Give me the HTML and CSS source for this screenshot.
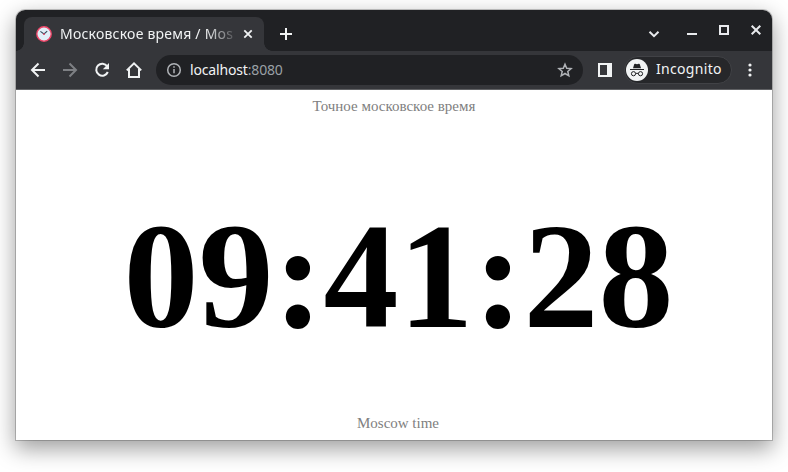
FILE: index.html
```html
<!DOCTYPE html>
<html lang="ru">
<head>
<meta charset="utf-8">
<title>Московское время</title>
<link rel="stylesheet" href="styles.css">
</head>
<body>
<div class="window">
  <header class="tabs">
    <div class="tab">
      <svg class="favicon" width="16" height="16" viewBox="0 0 16 16"><circle cx="8" cy="8" r="7.2" fill="#e1eff8" stroke="#f0476a" stroke-width="1.4"/><path d="M4.4 5.4 8 8l3.2-2.8" fill="none" stroke="#334b5c" stroke-width="1.1"/><circle cx="8" cy="8.2" r=".9" fill="#ef4b6c"/></svg>
      <span class="tab-title">Московское время / Mos</span>
      <svg class="tab-close" width="10" height="10" viewBox="0 0 10 10"><path d="m1.3 1.3 7.4 7.4m0-7.4L1.3 8.7"/></svg>
    </div>
    <svg class="new-tab" width="14" height="14" viewBox="0 0 14 14"><path d="M7 1v12M1 7h12"/></svg>
    <div class="controls">
      <svg width="12" height="12" viewBox="0 0 12 12"><path d="m1.5 3.7 4.5 4.5 4.5-4.5"/></svg>
      <svg width="12" height="12" viewBox="0 0 12 12"><path d="M1 10h10"/></svg>
      <svg width="12" height="12" viewBox="0 0 12 12"><path d="M2 2h8v8H2z"/></svg>
      <svg width="12" height="12" viewBox="0 0 12 12"><path d="m1.7 1.7 8.6 8.6m0-8.6-8.6 8.6"/></svg>
    </div>
  </header>
  <nav class="toolbar">
    <svg class="nav-icon" width="16" height="16" viewBox="0 0 16 16"><path d="M15 8H2m6.5-6.5L2 8l6.5 6.5"/></svg>
    <svg class="nav-icon off" width="16" height="16" viewBox="0 0 16 16"><path d="M1 8h13M7.5 1.5 14 8l-6.5 6.5"/></svg>
    <svg class="nav-icon" width="16" height="16" viewBox="0 0 16 16"><path d="M13.2 4.3A6 6 0 1 0 13.8 10"/><path class="solid" d="M15 1v6.2H8.8z"/></svg>
    <svg class="nav-icon" width="16" height="16" viewBox="0 0 16 16"><path d="M.8 8.4 8 1.4l7.2 7M3 7v8h10V7"/></svg>
    <div class="address">
      <svg width="16" height="16" viewBox="0 0 16 16"><circle cx="8" cy="8" r="6.3"/><path d="M8 7v4.3M8 4.2v1.6"/></svg>
      <span class="url"><b>localhost</b><i>:8080</i></span>
      <svg width="16" height="16" viewBox="0 0 16 16"><path d="m8 2.2 1.7 4 4.4.4-3.3 2.9 1 4.3L8 11.5l-3.8 2.3 1-4.3-3.3-2.9 4.4-.4z"/></svg>
    </div>
    <svg class="panel" width="14" height="14" viewBox="0 0 14 14"><path d="M0 0h14v14H0zM2 2v10h7V2z"/></svg>
    <div class="profile">
      <svg width="22" height="22" viewBox="0 0 22 22"><circle cx="11" cy="11" r="11" fill="#f1f3f4"/><path d="M7 9.2 8.2 5.2q.3-.7 1-.5l1.8.5 1.8-.5q.7-.2 1 .5L15 9.2z" fill="#202124"/><path d="M4 10.5h14M9.7 14.6q1.3-.8 2.6 0" fill="none" stroke="#202124"/><circle cx="7.5" cy="14.7" r="2.1" fill="none" stroke="#202124"/><circle cx="14.5" cy="14.7" r="2.1" fill="none" stroke="#202124"/></svg>
      <span>Incognito</span>
    </div>
    <svg class="more" width="4" height="14" viewBox="0 0 4 14"><circle cx="2" cy="2" r="1.6"/><circle cx="2" cy="7" r="1.6"/><circle cx="2" cy="12" r="1.6"/></svg>
  </nav>
  <main class="page">
    <p>Точное московское время</p>
    <h1>09:41:28</h1>
    <p class="caption">Moscow time</p>
  </main>
</div>
</body>
</html>
```

FILE: styles.css
```css
* { box-sizing: border-box; }
body {
  margin: 0;
  height: 472px;
  padding: 10px 16px 32px;
  overflow: hidden;
  background: #fff;
  font-family: "Noto Sans", sans-serif;
}
svg { display: block; flex: none; }
.window {
  height: 430px;
  display: flex;
  flex-direction: column;
  border-radius: 9px 9px 0 0;
  box-shadow: 0 0 0 1px rgba(0, 0, 0, .2), 0 8px 22px 1px rgba(0, 0, 0, .38);
}
.tabs {
  height: 41px;
  display: flex;
  padding: 7px 10px 0 8px;
  border-radius: 9px 9px 0 0;
  background: #202124;
}
.tab {
  position: relative;
  width: 240px;
  height: 34px;
  display: flex;
  align-items: center;
  padding: 0 11px 0 12px;
  border-radius: 8px 8px 0 0;
  background: #35363a;
}
.tab::before, .tab::after {
  content: "";
  position: absolute;
  bottom: 0;
  width: 8px;
  height: 8px;
}
.tab::before { left: -8px; background: radial-gradient(circle at 0 0, transparent 7.5px, #35363a 8px); }
.tab::after { right: -8px; background: radial-gradient(circle at 100% 0, transparent 7.5px, #35363a 8px); }
.tab-title {
  width: 175px;
  margin: 0 8px;
  white-space: nowrap;
  font-size: 14px;
  letter-spacing: .22px;
  line-height: 20px;
  color: #f1f3f4;
  -webkit-mask-image: linear-gradient(90deg, #000 145px, transparent 180px);
  mask-image: linear-gradient(90deg, #000 145px, transparent 180px);
}
.tab-close, .new-tab, .controls svg { fill: none; stroke: #f1f3f4; stroke-width: 1.8; }
.new-tab { margin: 10px 0 0 15px; stroke-width: 2; }
.controls {
  display: flex;
  margin-left: auto;
  padding-top: 7px;
  gap: 20px;
}
.controls svg { stroke: #e8eaed; stroke-width: 2; }
.controls svg:first-child { margin: 4px 6px 0 0; }
.toolbar {
  height: 38px;
  flex: none;
  display: flex;
  align-items: center;
  padding: 0 19px 0 14px;
  background: #35363a;
}
.nav-icon {
  margin-right: 16px;
  fill: none;
  stroke: #f1f3f4;
  stroke-width: 2;
}
.nav-icon.off { stroke: #7e8084; }
.nav-icon .solid { fill: #f1f3f4; stroke: none; }
.address {
  width: 427px;
  flex: none;
  height: 30px;
  display: flex;
  align-items: center;
  margin-left: -2px;
  padding: 0 10px;
  border-radius: 15px;
  background: #202124;
}
.address svg { fill: none; stroke: #b0b3b7; stroke-width: 1.5; }
.url { margin: 0 auto 0 8px; font-size: 14px; letter-spacing: -.16px; line-height: 20px; }
.url b { font-weight: 400; color: #f1f3f4; }
.url i { font-style: normal; color: #9aa0a6; }
.panel { margin-left: 15px; fill: #f1f3f4; fill-rule: evenodd; }
.profile {
  width: 108px;
  height: 28px;
  display: flex;
  align-items: center;
  gap: 8px;
  margin-left: 12px;
  padding-left: 1px;
  border: 1px solid #414246;
  border-radius: 14px;
  background: #26272a;
  color: #f1f3f4;
  font-size: 14px;
  line-height: 18px;
  letter-spacing: .32px;
}
.profile span { padding-bottom: 2px; }
.more { margin-left: 16px; fill: #f1f3f4; }
.page {
  flex: 1;
  display: flex;
  flex-direction: column;
  align-items: center;
  padding: 8px 0;
  border-top: 1px solid #606164;
  background: #fff;
  color: #808080;
  font-family: "Liberation Serif", serif;
}
.page p { margin: 0; font-size: 15px; line-height: 17px; }
.page h1 {
  margin: 75px 0 0;
  padding-left: 9px;
  color: #000;
  font-size: 150px;
  line-height: 172px;
}
.page .caption { margin-top: auto; padding-left: 8px; }
```
